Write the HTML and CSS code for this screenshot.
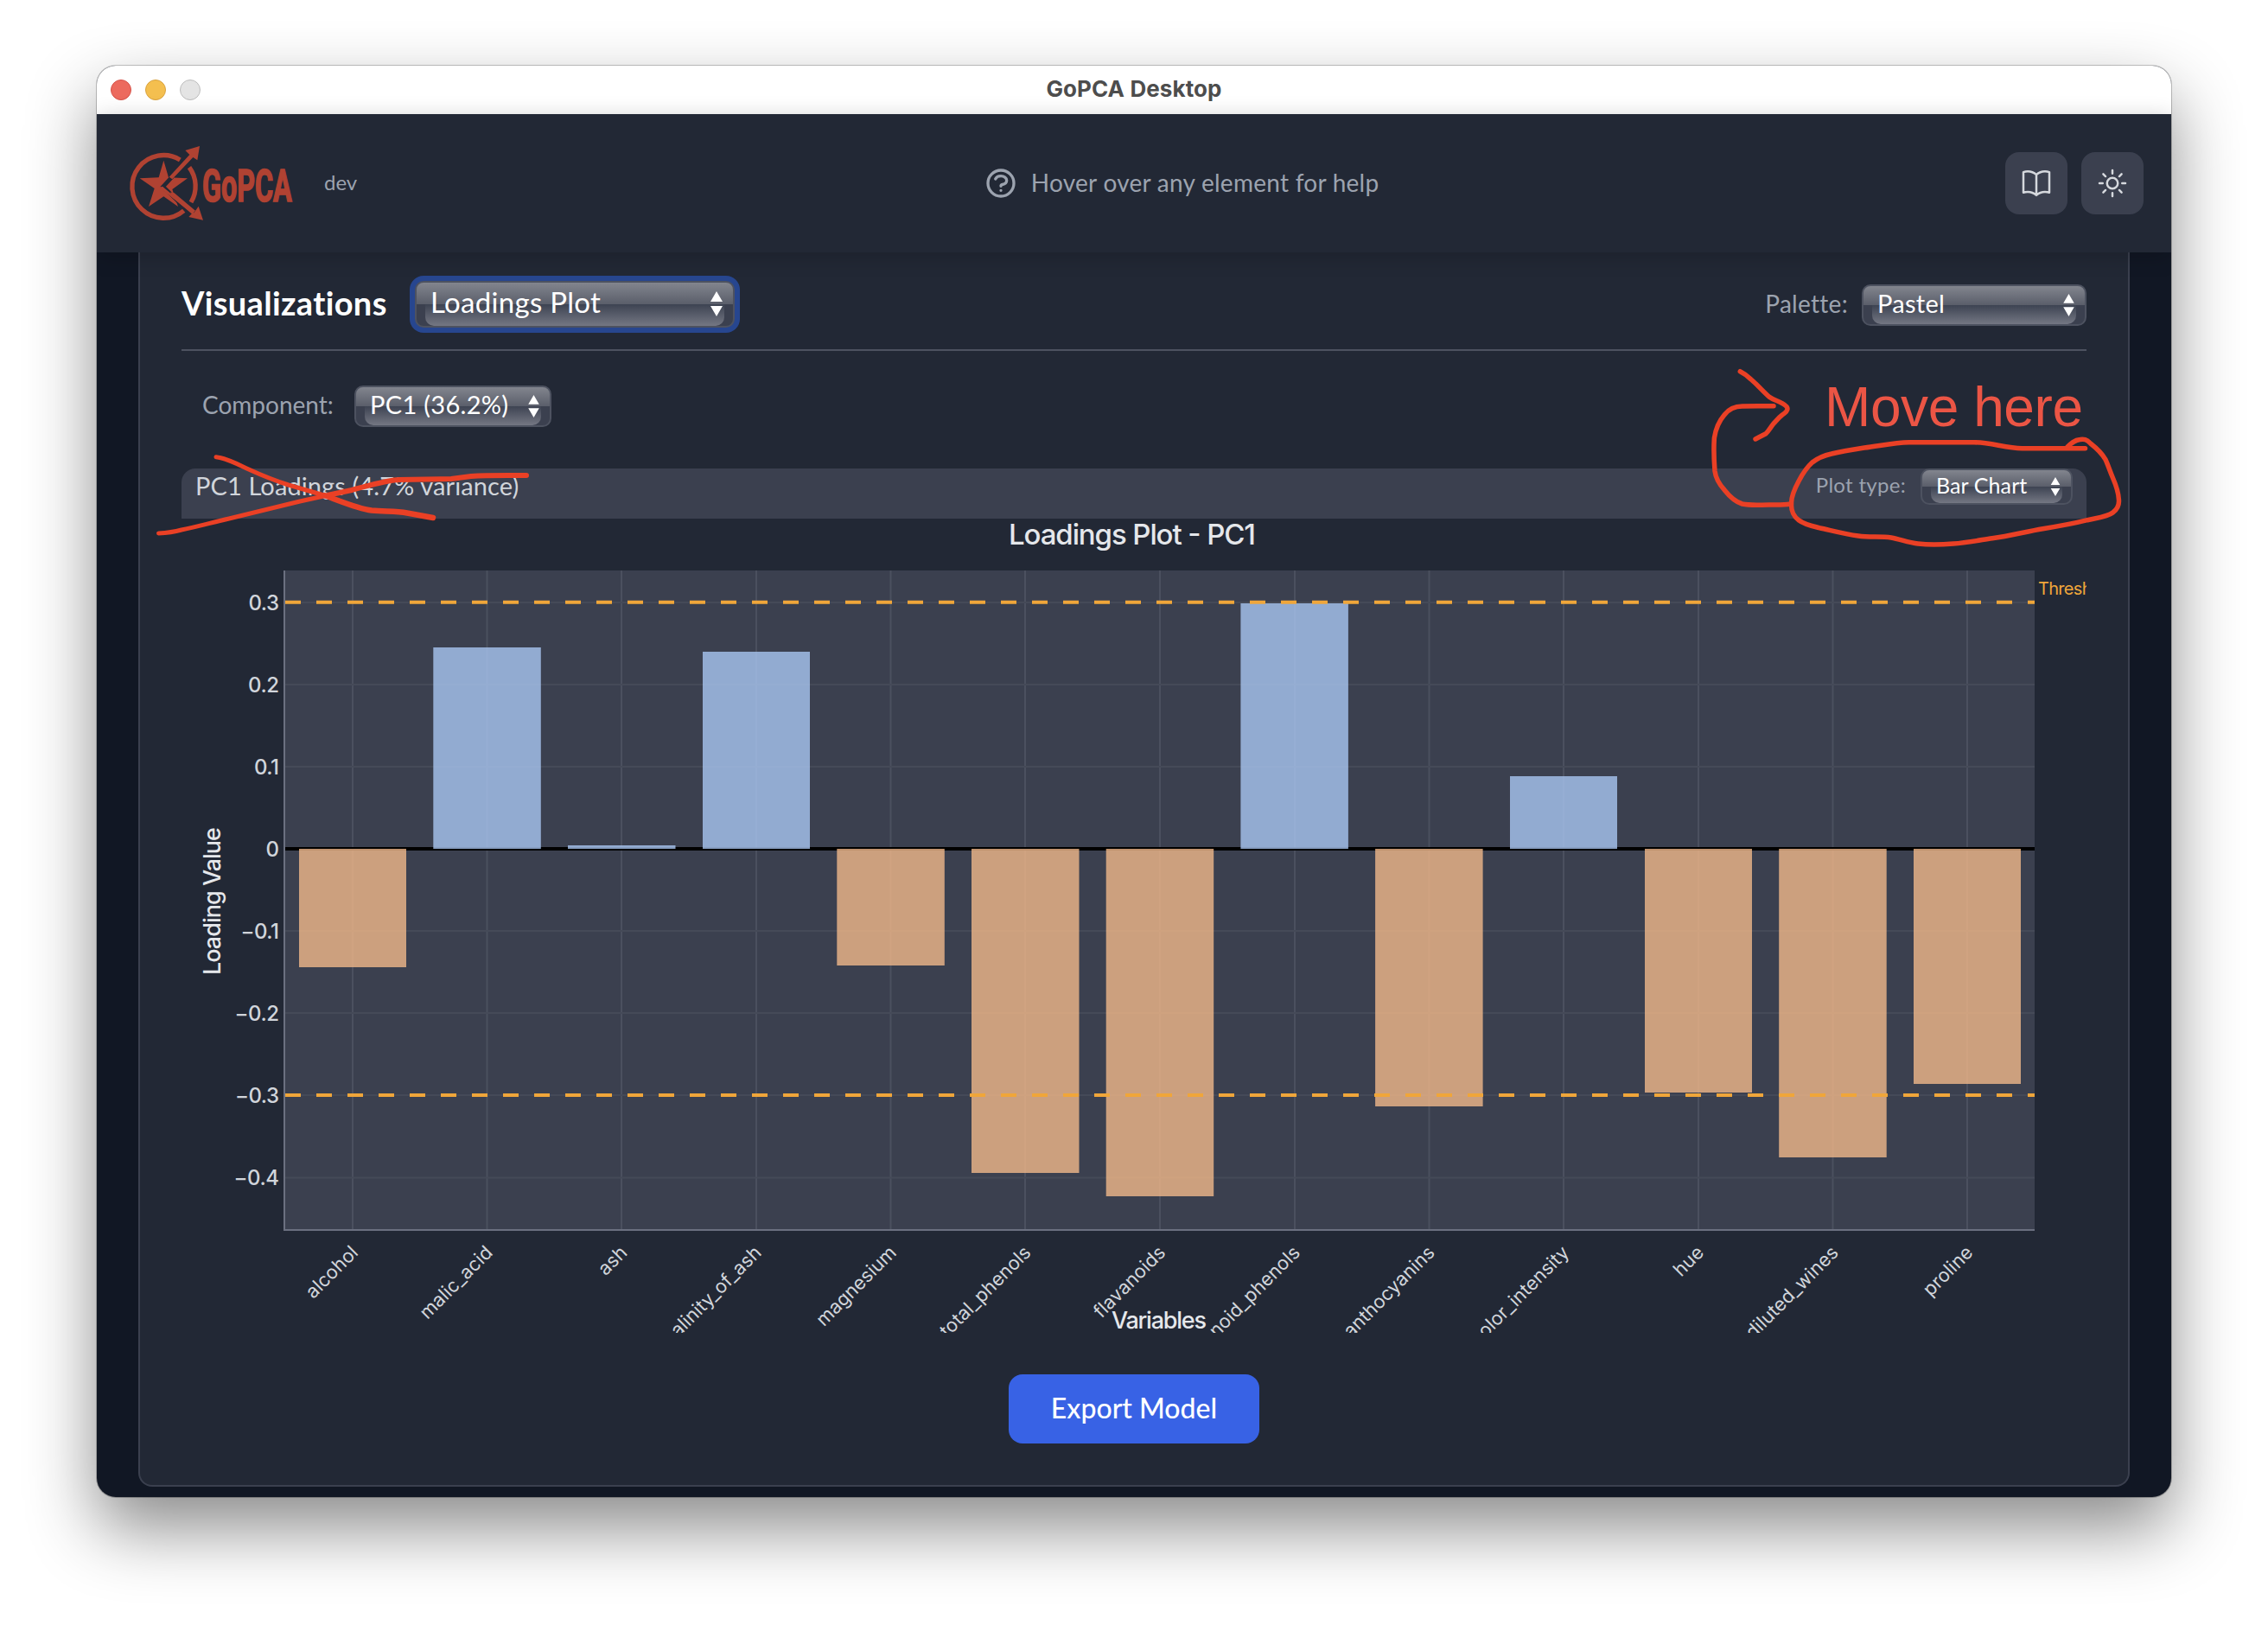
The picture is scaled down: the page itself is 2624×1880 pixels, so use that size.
FILE: index.html
```html
<!DOCTYPE html>
<html lang="en">
<head>
<meta charset="utf-8">
<title>GoPCA Desktop</title>
<link rel="stylesheet" href="styles.css">
</head>
<body>
<div class="window">
  <div class="titlebar">
    <div class="lights"><i class="light close"></i><i class="light minimize"></i><i class="light zoom"></i></div>
    <span class="window-title">GoPCA Desktop</span>
  </div>
  <header class="header">
    <div class="brand">
      <svg class="logo" viewBox="0 0 600 285" role="img" aria-label="GoPCA">
        <g fill="none" stroke="#b04232" stroke-width="16">
          <path d="M190 60A109 109 0 1 0 203 236"/>
          <path d="M222 86A109 109 0 0 1 228 207"/>
        </g>
        <path fill="#b04232" d="M133 62L150 121L216 124L163 162L183 222L133 187L81 222L101 159L50 124L116 121Z"/>
        <path fill="none" stroke="#222835" stroke-width="14" d="M163 118L131 153L188 208"/>
        <path fill="#b04232" d="M152 119L223 42L208 27L258 12L250 61L235 51L163 127Z"/>
        <path fill="#b04232" d="M118 156L129 152L238 244L254 221L270 269L220 258L232 245Z"/>
        <path fill="#b04232" d="M158 172L170 175L243 236L232 248L155 183Z"/>
        <text class="logo-text" x="267" y="203" textLength="311" lengthAdjust="spacingAndGlyphs">GoPCA</text>
      </svg>
      <span class="version">dev</span>
    </div>
    <div class="help">
      <svg class="icon" viewBox="0 0 24 24"><path stroke-width="2" d="M8.228 9c.549-1.165 2.03-2 3.772-2 2.21 0 4 1.343 4 3 0 1.4-1.278 2.575-3.006 2.907-.542.104-.994.54-.994 1.093m0 3h.01M21 12a9 9 0 11-18 0 9 9 0 0118 0z"/></svg>
      <span class="help-text">Hover over any element for help</span>
    </div>
    <div class="actions">
      <button class="icon-button"><svg class="icon" viewBox="0 0 24 24"><path stroke-width="1.5" d="M12 6.042A8.967 8.967 0 0 0 6 3.75c-1.052 0-2.062.18-3 .512v14.25A8.987 8.987 0 0 1 6 18c2.305 0 4.408.867 6 2.292m0-14.25a8.966 8.966 0 0 1 6-2.292c1.052 0 2.062.18 3 .512v14.25A8.987 8.987 0 0 0 18 18a8.967 8.967 0 0 0-6 2.292m0-14.25v14.25"/></svg></button>
      <button class="icon-button"><svg class="icon" viewBox="0 0 24 24"><path stroke-width="1.5" d="M12 3v2.25m6.364.386-1.591 1.591M21 12h-2.25m-.386 6.364-1.591-1.591M12 18.75V21m-4.773-4.227-1.591 1.591M5.25 12H3m4.227-4.773L5.636 5.636M15.75 12a3.75 3.75 0 1 1-7.5 0 3.75 3.75 0 0 1 7.5 0Z"/></svg></button>
    </div>
  </header>
  <main class="content">
    <section class="panel">
      <div class="toolbar">
        <h2 class="heading">Visualizations</h2>
        <div class="select large focused"><span>Loadings Plot</span><svg class="arrows" viewBox="0 0 14 29"><path d="M7 0L14 12H0ZM7 29L14 17H0Z"/></svg></div>
        <div class="palette">
          <span class="label">Palette:</span>
          <div class="select palette-select"><span>Pastel</span><svg class="arrows" viewBox="0 0 14 29"><path d="M7 0L14 12H0ZM7 29L14 17H0Z"/></svg></div>
        </div>
      </div>
      <div class="controls">
        <span class="label component-label">Component:</span>
        <div class="select component-select"><span>PC1 (36.2%)</span><svg class="arrows" viewBox="0 0 14 29"><path d="M7 0L14 12H0ZM7 29L14 17H0Z"/></svg></div>
      </div>
      <div class="plot-header">
        <span class="plot-name">PC1 Loadings (4.7% variance)</span>
        <div class="plot-type">
          <span class="label small">Plot type:</span>
          <div class="select compact"><span>Bar Chart</span><svg class="arrows" viewBox="0 0 14 29"><path d="M7 0L14 12H0ZM7 29L14 17H0Z"/></svg></div>
        </div>
      </div>
      <svg class="chart" viewBox="210 600 2204 942" width="2204" height="942">
        <rect x="330" y="660" width="2024" height="762" fill="#3b404f"/>
        <path class="grid-x" d="M408 660V1422M563.5 660V1422M719 660V1422M875 660V1422M1030.500 660V1422M1186 660V1422M1342 660V1422M1498 660V1422M1653.500 660V1422M1809 660V1422M1965 660V1422M2120.500 660V1422M2276 660V1422"/>
        <path class="grid-y" d="M330 697H2354M330 792H2354M330 887H2354M330 1077H2354M330 1172H2354M330 1267H2354M330 1362.500H2354"/>
        <path stroke="#000" stroke-width="4" d="M330 982H2354"/>
        <g class="negative">
          <rect x="346" y="982" width="124" height="137"/>
          <rect x="968.300" y="982" width="124.500" height="135"/>
          <rect x="1124" y="982" width="124.500" height="375"/>
          <rect x="1279.700" y="982" width="124.500" height="402"/>
          <rect x="1591.100" y="982" width="124.500" height="298"/>
          <rect x="1903" y="982" width="124" height="282"/>
          <rect x="2058.200" y="982" width="124.500" height="357"/>
          <rect x="2214" y="982" width="124" height="272"/>
        </g>
        <g class="positive">
          <rect x="501.300" y="749" width="124.500" height="233"/>
          <rect x="657" y="978" width="124.500" height="4"/>
          <rect x="813" y="754" width="124" height="228"/>
          <rect x="1435.400" y="698" width="124.500" height="284"/>
          <rect x="1747" y="898" width="124" height="84"/>
        </g>
        <path class="threshold" d="M330 696.700H2354M330 1267H2354"/>
        <path fill="none" stroke="#6b7080" stroke-width="2" d="M329 660V1423H2354"/>
        <text class="chart-title" x="1167" y="630" textLength="286">Loadings Plot - PC1</text>
        <g class="ticks">
          <text x="322.500" y="706">0.3</text><text x="322.500" y="801">0.2</text><text x="322.500" y="896">0.1</text><text x="322.500" y="991">0</text>
          <text x="322.500" y="1086">−0.1</text><text x="322.500" y="1181">−0.2</text><text x="322.500" y="1276">−0.3</text><text x="322.500" y="1371">−0.4</text>
        </g>
        <g class="names">
          <text transform="translate(415.500 1450.500) rotate(-45)">alcohol</text>
          <text transform="translate(571.200 1450.500) rotate(-45)">malic_acid</text>
          <text transform="translate(726.900 1450.500) rotate(-45)">ash</text>
          <text transform="translate(882.100 1450.500) rotate(-45)">alcalinity_of_ash</text>
          <text transform="translate(1038.300 1450.500) rotate(-45)">magnesium</text>
          <text transform="translate(1194 1450.500) rotate(-45)">total_phenols</text>
          <text transform="translate(1349.700 1450.500) rotate(-45)">flavanoids</text>
          <text transform="translate(1505.400 1450.500) rotate(-45)">nonflavanoid_phenols</text>
          <text transform="translate(1661.100 1450.500) rotate(-45)">proanthocyanins</text>
          <text transform="translate(1816.800 1450.500) rotate(-45)">color_intensity</text>
          <text transform="translate(1972.500 1450.500) rotate(-45)">hue</text>
          <text transform="translate(2128.200 1450.500) rotate(-45)">od280/od315_of_diluted_wines</text>
          <text transform="translate(2283.900 1450.500) rotate(-45)">proline</text>
        </g>
        <text class="axis-title" x="1286" y="1536.500" textLength="110">Variables</text>
        <text class="axis-title" transform="translate(254.500 1128) rotate(-90)" textLength="171">Loading Value</text>
        <text class="threshold-label" x="2358" y="688">Threshold</text>
      </svg>
      <button class="export">Export Model</button>
    </section>
  </main>
  <svg class="markup" viewBox="112 76 2400 1656">
    <path stroke-width="5" d="M250 528.700C262 530 275 537 287.700 543C303 550 318 556 333.700 561L375 573"/>
    <path stroke-width="6.500" d="M375 573C395 580 412 588 430 590.500C445 592 458 591 471 593.500L501 599"/>
    <path stroke-width="5" d="M183.500 617C195 616.500 203 615 210 613C230 609 247 604 265 600L347 580L380 572.700"/>
    <path stroke-width="6" d="M380 572.700L407 567C430 561 445 556 462 555L522 554C530 553 537 552 545 551C565 549.500 588 550 609 550"/>
    <path stroke-width="5.500" d="M2071.500 583C2063 584.500 2055 584 2046.700 584C2036 584 2025 585 2015.700 583C2006 580 2000 573 1995 566.700C1989 560 1985 553 1984 545C1983 532 1982.500 519 1983.400 506.700C1985 496 1989 487 1995 480C2001 472 2008 470 2015.800 470L2052 469.700"/>
    <path stroke-width="5.500" d="M2013.300 429.700C2018 432 2022 435 2026 439C2033 445 2040 453 2046.700 459C2052 463 2058 464 2062 466.700C2066 469 2068 471 2068 473C2068 476 2065 478 2062 480C2058 483 2055 487 2052 490C2048 495 2046 499 2043 501.700L2031 508"/>
    <path stroke-width="5.500" d="M2412.500 518.700H2339.500C2320 518 2303 512 2284 511.700H2208.600C2191 512 2174 516 2157 518C2144 520 2131 522 2119 525C2110 527 2103 530 2096.700 535C2090 541 2085 549 2081 556.700C2076 566 2072 575 2072.600 583C2072 591 2076 598 2081 601.700C2088 607 2096 608.500 2105 610.700C2120 614 2135 618 2150 620C2163 622 2176 620 2188 622C2199 624 2208 628 2219 629C2233 630.500 2247 630 2260 629C2275 628 2290 625 2305 622.700C2325 620 2344 615 2363.500 611.700C2381 609 2398 606 2415 601.700C2427 599 2438 598 2444.500 593C2450 589 2452 584 2451.400 578C2451 569 2448 561 2444.500 553C2441 545 2439 538 2436 531.700C2431 523 2425 518 2418.600 513C2414 508 2411 508 2406.600 508.500C2400 509 2396 513 2392 517"/>
    <text class="note" x="2111" y="493" textLength="299">Move here</text>
  </svg>
</div>
</body>
</html>
```
FILE: styles.css
```css
* { box-sizing: border-box; }

body {
  height: 1880px;
  margin: 0;
  padding: 76px 112px;
  overflow: hidden;
  background: #fff;
  font-family: Lato, "Open Sans", sans-serif;
  color: #fff;
}

button { border: 0; font: inherit; color: inherit; }

.window {
  position: relative;
  width: 2400px;
  height: 1656px;
  border-radius: 22px;
  overflow: clip;
  background: #111724;
  box-shadow: 0 0 0 1px rgba(0, 0, 0, .22), 0 36px 80px rgba(0, 0, 0, .46);
}

.titlebar {
  display: grid;
  grid-template-columns: 1fr auto 1fr;
  align-items: center;
  height: 56px;
  padding: 0 16px;
  background: #fff;
}
.lights { display: flex; gap: 16px; }
.light { width: 24px; height: 24px; border-radius: 50%; border: 1px solid; }
.close { background: #ec6a5e; border-color: #d5524a; }
.minimize { background: #f4bf4f; border-color: #d8a23f; }
.zoom { background: #e4e4e4; border-color: #bdbdbd; }
.window-title { padding-bottom: 2px; font: 700 26px/54px Inter, sans-serif; letter-spacing: .1px; color: #4d4d4d; }

.header {
  position: relative;
  z-index: 1;
  display: flex;
  justify-content: space-between;
  align-items: center;
  height: 160px;
  padding: 0 32px 0 33px;
  background: #222835;
  box-shadow: 0 4px 24px rgba(0, 0, 0, .2);
}
.brand { display: flex; align-items: center; gap: 30px; }
.logo { width: 200px; height: 95px; }
.logo-text { font: 700 157px Roboto, sans-serif; fill: #b04232; stroke: #b04232; stroke-width: 5px; }
.version { padding-bottom: 2px; font-size: 24px; line-height: 32px; color: #9ca3af; }
.help { display: flex; align-items: center; gap: 15px; color: #9ca3af; }
.help-text { padding-bottom: 3px; font-size: 28px; line-height: 40px; letter-spacing: .26px; }
.icon { display: block; width: 40px; height: 40px; fill: none; stroke: currentColor; stroke-linecap: round; stroke-linejoin: round; }
.actions { display: flex; gap: 16px; }
.icon-button {
  display: grid;
  place-items: center;
  width: 72px;
  height: 72px;
  padding: 0;
  border-radius: 16px;
  background: #3b404f;
  color: #d5d8dd;
}

.content { height: 1440px; padding: 0 48px; }
.panel {
  height: 1428px;
  padding: 0 48px;
  border: 2px solid #3b404f;
  border-top: 0;
  border-radius: 0 0 16px 16px;
  background: #222835;
}
.toolbar {
  display: flex;
  align-items: flex-start;
  height: 114px;
  padding-top: 33px;
  border-bottom: 2px solid #4d5260;
}
.heading { width: 270px; margin: 0; font-size: 38px; line-height: 51px; font-weight: 700; letter-spacing: .35px; }
.palette { display: flex; gap: 16px; margin-left: auto; padding-top: 4px; }
.label { font-size: 28px; line-height: 44px; letter-spacing: .3px; color: #9ca3af; }
.label.small { font-size: 24px; line-height: 38px; }
.component-label { width: 152px; letter-spacing: 0; white-space: nowrap; }

.select {
  display: flex;
  justify-content: space-between;
  align-items: center;
  position: relative;
  z-index: 0;
  width: 260px;
  height: 48px;
  padding: 0 12px 5px 16px;
  border: 2px solid #4d5260;
  border-radius: 10px;
  font-size: 29px;
  letter-spacing: .3px;
  background:
    linear-gradient(#82858e, #5a5e6a) 0 0 / 100% 50% no-repeat,
    #3b404f;
}
.select::before {
  content: "";
  position: absolute;
  z-index: -1;
  inset: 50% 10px 0;
  border-radius: 0 0 10px 10px;
  background: linear-gradient(#3d4352, #747783);
}
.arrows { width: 13px; height: 26px; margin-top: 5px; fill: #fff; }
.select.large { width: 370px; height: 54px; padding-bottom: 6px; font-size: 33px; }
.select.large .arrows { width: 14px; height: 29px; }
.focused { box-shadow: 0 0 0 6px #27468f; }
.component-select { width: 228px; }
.select.compact { width: 176px; height: 42px; font-size: 25px; letter-spacing: .1px; }
.compact .arrows { width: 12px; height: 22px; }

.controls { display: flex; gap: 24px; height: 48px; margin-top: 40px; padding-left: 24px; }
.plot-header {
  display: flex;
  justify-content: space-between;
  height: 58px;
  margin-top: 48px;
  padding: 0 16px;
  border-radius: 16px 16px 0 0;
  background: #3b404f;
}
.plot-name { font-size: 29px; line-height: 39px; letter-spacing: .1px; color: #d1d5db; }
.plot-type { display: flex; gap: 17px; }

.chart { display: block; overflow: hidden; font-family: Inter, sans-serif; }
.grid-x { stroke: #4b505f; stroke-width: 2; }
.grid-y { stroke: #454a58; stroke-width: 2; }
.negative { fill: #f1b889; fill-opacity: .8; }
.positive { fill: #a9c6f1; fill-opacity: .8; }
.threshold { stroke: #f0a63a; stroke-width: 4; stroke-dasharray: 18 18; }
.chart-title { font-size: 33px; font-weight: 500; fill: #e5e7eb; }
.axis-title { font-size: 27px; font-weight: 500; fill: #e5e7eb; }
.ticks { font-size: 24px; font-weight: 500; letter-spacing: -.5px; fill: #d1d5db; text-anchor: end; }
.names { font-size: 22px; fill: #d1d5db; text-anchor: end; }
.threshold-label { font-size: 20px; letter-spacing: -.7px; fill: #f0a63a; }

.export {
  display: block;
  width: 290px;
  height: 80px;
  margin: 48px auto 0;
  padding: 0 0 4px;
  border-radius: 16px;
  background: #3862e5;
  font-size: 32px;
  font-weight: 500;
}

.markup {
  position: absolute;
  z-index: 2;
  inset: 0;
  width: 2400px;
  height: 1656px;
  fill: none;
  stroke: #ea4025;
  stroke-linecap: round;
  stroke-linejoin: round;
  pointer-events: none;
}
.note { font: 64px "Liberation Sans", Arial, sans-serif; fill: #eb5545; stroke: none; }
```
